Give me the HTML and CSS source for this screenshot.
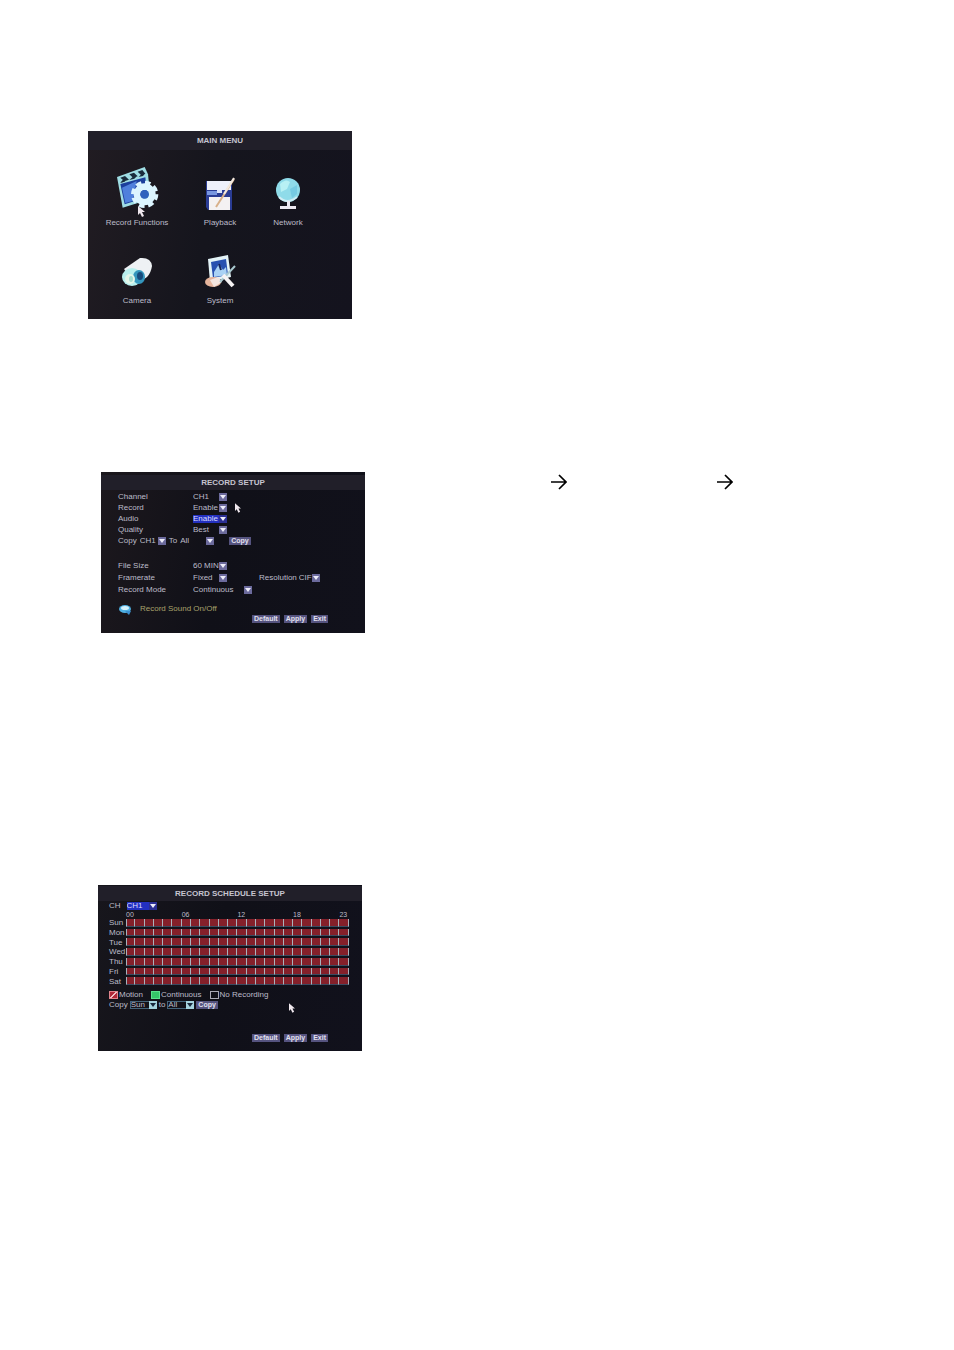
FILE: index.html
```html
<!DOCTYPE html>
<html lang="en">
<head>
    <meta charset="UTF-8">
    <meta name="viewport" content="width=device-width, initial-scale=1.0">
    <title>DVR Record Setup</title>
    <link rel="stylesheet" href="styles.css">
</head>
<body>

    <main class="page">

        <!-- main menu -->
        <section class="screen menu-screen">
            <h2 class="title">MAIN MENU</h2>
            <nav class="menu">
                <a class="item" href="#record">
                    <svg width="44" height="45" viewBox="45 33 132 135">
                        <path d="M51 66 L134 36 L144 58 L152 132 L68 158 Z" fill="#9fdde4"/>
                        <path d="M61 87 L136 67 L143 126 L74 148 Z" fill="#1c3f9c"/>
                        <path d="M66 98 L110 78 L98 138 L76 144 Z" fill="#4f80dc"/>
                        <path d="M61 68 l14 -5 l12 11 l-14 5z M88 58 l14 -5 l11 11 l-14 4z M113 50 l14 -5 l9 11 l-13 4z M60 84 l8 -9 l14 -4 l-8 9z M88 75 l10 -9 l14 -4 l-9 9z M116 66 l8 -8 l12 -3 l-7 8z" fill="#1a2c3c"/>
                        <circle cx="134" cy="118" r="23" fill="none" stroke="#dcf5ff" stroke-width="20"/>
                        <circle cx="134" cy="118" r="34" fill="none" stroke="#dcf5ff" stroke-width="14" stroke-dasharray="16 10.7"/>
                        <circle cx="134" cy="118" r="13" fill="#2f62bd"/>
                    </svg>
                    <span>Record Functions</span>
                    <svg class="cursor menu-cursor" width="7" height="11" viewBox="0 0 7 11"><path d="M0 0 L7 6 L4 6 L6 10 L4 11 L2 7 L0 9 Z" fill="#f0e8ee"/></svg>
                </a>
                <a class="item" href="#playback">
                    <svg width="32" height="34" viewBox="0 0 32 34">
                        <path d="M2 4 H28 V33 H4 L2 30 Z" fill="#2a3c94"/>
                        <path d="M3 4 H27 V13 H3 Z" fill="#eef0fa"/>
                        <path d="M3 14 H13 V18 H3 Z" fill="#7896e0"/>
                        <path d="M5 20 H26 V33 H5 Z" fill="#f4f1f2"/>
                        <path d="M13 13 H18 V16 H13 Z" fill="#dce4fa"/>
                        <path d="M30 2 L12 30" stroke="#d8b08a" stroke-width="2"/>
                        <path d="M30 1 L20 17" stroke="#f3e9df" stroke-width="2"/>
                    </svg>
                    <span>Playback</span>
                </a>
                <a class="item" href="#network">
                    <svg width="26" height="34" viewBox="0 0 26 34">
                        <circle cx="13" cy="13" r="12" fill="#8fdbe9"/>
                        <path d="M5 7 Q11 1 15 5 L12 12 L6 15 Z" fill="#b8f1f4"/>
                        <path d="M15 12 L22 8 L22 17 L17 21 Z" fill="#76cbe2"/>
                        <path d="M4 20 Q12 28 22 20" fill="none" stroke="#d0edf4" stroke-width="2"/>
                        <path d="M12 24 H15 V29 H21 V32 H5 V29 H12 Z" fill="#ece9f2"/>
                    </svg>
                    <span>Network</span>
                </a>
                <a class="item" href="#camera">
                    <svg width="32" height="34" viewBox="0 0 32 34">
                        <path d="M3 14 L19 3 Q30 2 31 11 Q30 18 26 22 L15 30 Z" fill="#eef1f4"/>
                        <ellipse cx="11" cy="22" rx="10" ry="9" fill="#b9f0ee"/>
                        <ellipse cx="18" cy="22" rx="6" ry="7" fill="#3496bd"/>
                        <ellipse cx="19" cy="21" rx="3" ry="4" fill="#174b7c"/>
                        <ellipse cx="9" cy="24" rx="5" ry="5" fill="#e4f7ea"/>
                        <ellipse cx="10" cy="24" rx="2" ry="3" fill="#a4ddd0"/>
                    </svg>
                    <span>Camera</span>
                </a>
                <a class="item" href="#system">
                    <svg width="32" height="34" viewBox="0 0 32 34">
                        <path d="M4 4 L24 0 L27 22 L6 27 Z" fill="#e3f3f7"/>
                        <path d="M7 7 L22 4 L24 20 L9 23 Z" fill="#2750b0"/>
                        <path d="M10 17 L15 9 L19 15 L22 12 L23 20 L10 22 Z" fill="#a9d2f4"/>
                        <path d="M15 9 L17 15" stroke="#14245c" stroke-width="2"/>
                        <ellipse cx="9" cy="27" rx="8" ry="5" fill="#e5b49c"/>
                        <path d="M6 25 L14 22 L18 27 L10 32 Z" fill="#f3e5df"/>
                        <path d="M31 11 L16 27" stroke="#a9c9d0" stroke-width="2"/>
                        <path d="M19 20 L29 31" stroke="#f6f3f4" stroke-width="4"/>
                    </svg>
                    <span>System</span>
                </a>
            </nav>
        </section>

        <!-- record setup -->
        <div class="step">
            <form class="screen setup-screen">
                <h2 class="title">RECORD SETUP</h2>
                <div class="fields">
                    <div class="row">
                        <label for="channel">Channel</label>
                        <span class="pick"><select id="channel"><option>CH1</option></select></span>
                    </div>
                    <div class="row">
                        <label for="record">Record</label>
                        <span class="pick"><select id="record"><option>Enable</option></select></span>
                    </div>
                    <div class="row">
                        <label for="audio">Audio</label>
                        <span class="pick active"><select id="audio"><option>Enable</option></select></span>
                    </div>
                    <div class="row">
                        <label for="quality">Quality</label>
                        <span class="pick"><select id="quality"><option>Best</option></select></span>
                    </div>
                    <div class="copy-row">
                        <label for="copyFrom">Copy</label>
                        <span class="pick short"><select id="copyFrom"><option>CH1</option></select></span>
                        <label for="copyTo">To</label>
                        <span class="pick"><select id="copyTo"><option>All</option></select></span>
                        <button type="button" class="copy-btn">Copy</button>
                    </div>
                </div>
                <div class="fields second">
                    <div class="row">
                        <label for="fileSize">File Size</label>
                        <span class="pick"><select id="fileSize"><option>60 MIN</option></select></span>
                    </div>
                    <div class="row">
                        <label for="framerate">Framerate</label>
                        <span class="pick"><select id="framerate"><option>Fixed</option></select></span>
                        <span class="resolution">
                            <label for="resolution">Resolution</label>
                            <span class="pick short"><select id="resolution"><option>CIF</option></select></span>
                        </span>
                    </div>
                    <div class="row">
                        <label for="mode">Record Mode</label>
                        <span class="pick long"><select id="mode"><option>Continuous</option></select></span>
                    </div>
                </div>
                <p class="hint">
                    <svg width="13" height="11" viewBox="0 0 13 11">
                        <ellipse cx="6" cy="5" rx="6" ry="4" fill="#4fb0e2"/>
                        <path d="M6 7 L12 7 L10 11 Z" fill="#3b8fd0"/>
                        <ellipse cx="6" cy="4" rx="4" ry="2" fill="#d3f0fa"/>
                    </svg>
                    Record Sound On/Off
                </p>
                <div class="buttons">
                    <button type="button">Default</button>
                    <button type="button">Apply</button>
                    <button type="button">Exit</button>
                </div>
                <svg class="cursor setup-cursor" width="6" height="10" viewBox="0 0 7 11"><path d="M0 0 L7 6 L4 6 L6 10 L4 11 L2 7 L0 9 Z" fill="#f0e8ee"/></svg>
            </form>
            <div class="path">
                <svg class="arrow" width="16" height="16" viewBox="0 0 16 16"><path d="M0 8 H15 M8 1 L15 8 L8 15" fill="none" stroke="#000" stroke-width="1.7"/></svg>
                <svg class="arrow" width="16" height="16" viewBox="0 0 16 16"><path d="M0 8 H15 M8 1 L15 8 L8 15" fill="none" stroke="#000" stroke-width="1.7"/></svg>
            </div>
        </div>

        <!-- schedule -->
        <form class="screen schedule-screen">
            <h2 class="title">RECORD SCHEDULE SETUP</h2>
            <div class="channel-row">
                <label for="scheduleChannel">CH</label>
                <span class="pick active"><select id="scheduleChannel"><option>CH1</option></select></span>
            </div>
            <table class="schedule">
                <thead>
                    <tr>
                        <th class="day"></th>
                        <th colspan="6">00</th>
                        <th colspan="6">06</th>
                        <th colspan="6">12</th>
                        <th colspan="5">18</th>
                        <th>23</th>
                    </tr>
                </thead>
                <tbody id="days"></tbody>
            </table>
            <div class="legend">
                <label><input type="checkbox" class="motion" checked>Motion</label>
                <label><input type="checkbox" class="continuous">Continuous</label>
                <label><input type="checkbox">No Recording</label>
            </div>
            <div class="copy-days">
                <label for="dayFrom">Copy</label>
                <span class="pick boxed"><select id="dayFrom"><option>Sun</option></select></span>
                <label for="dayTo">to</label>
                <span class="pick boxed"><select id="dayTo"><option>All</option></select></span>
                <button type="button">Copy</button>
            </div>
            <div class="buttons">
                <button type="button">Default</button>
                <button type="button">Apply</button>
                <button type="button">Exit</button>
            </div>
            <svg class="cursor schedule-cursor" width="6" height="10" viewBox="0 0 7 11"><path d="M0 0 L7 6 L4 6 L6 10 L4 11 L2 7 L0 9 Z" fill="#f0e8ee"/></svg>
        </form>

    </main>

    <script>
        const days = ["Sun", "Mon", "Tue", "Wed", "Thu", "Fri", "Sat"];
        const body = document.getElementById("days");

        days.forEach(day => {
            const row = body.insertRow();
            const head = document.createElement("th");
            head.className = "day";
            head.innerText = day;
            row.appendChild(head);
            for (let hour = 0; hour < 24; hour++) {
                row.insertCell();
            }
        });
    </script>

</body>
</html>
```
FILE: styles.css
```css
* {
    box-sizing: border-box;
}
body {
    margin: 0;
    background: white;
    font-family: "Liberation Sans", Arial, sans-serif;
    font-size: 8px;
    line-height: 10px;
}
.page {
    padding: 131px 88px;
}
.screen {
    position: relative;
    width: 100%;
    max-width: 264px;
    color: #bdbcc9;
    background: linear-gradient(100deg, #211c22, #15151d 45%, #14131e);
}
.title {
    margin: 0;
    font-size: 8px;
    line-height: 15px;
    text-align: center;
    color: #c6c4d0;
    background: #211f29;
}
.cursor {
    position: absolute;
}

/* main menu */
.menu-screen {
    padding-bottom: 13px;
}
.menu-screen .title {
    line-height: 19px;
}
.menu {
    display: grid;
    grid-template-columns: 98px 68px 68px;
    grid-auto-rows: 78px;
}
.item {
    position: relative;
    display: flex;
    flex-direction: column;
    align-items: center;
    justify-content: flex-end;
    gap: 7px;
    color: inherit;
    text-decoration: none;
    white-space: nowrap;
}
.menu-cursor {
    left: 50px;
    bottom: 11px;
}

/* form controls */
.pick {
    position: relative;
    display: inline-flex;
    width: 34px;
    height: 8px;
}
.pick::before {
    content: "";
    position: absolute;
    right: 0;
    top: 0;
    width: 8px;
    height: 8px;
    background: #6b6a9c;
    pointer-events: none;
}
.pick::after {
    content: "";
    position: absolute;
    right: 1px;
    top: 2px;
    border: 3px solid transparent;
    border-top: 4px solid #eeeefa;
    border-bottom: 0;
    pointer-events: none;
}
.pick.short {
    width: 26px;
}
.pick.long {
    width: 59px;
}
select {
    appearance: none;
    width: 100%;
    height: 8px;
    padding: 0;
    border: 0;
    border-radius: 0;
    background: transparent;
    color: inherit;
    font: inherit;
    line-height: 8px;
}
.active select {
    background: #2330c0;
    color: #dcdcff;
}
.active::before {
    background: #2b2f94;
}
button {
    height: 8px;
    padding: 0 2px;
    border: 0;
    background: #55537f;
    color: #e2e0ee;
    font: bold 7px/8px "Liberation Sans", Arial, sans-serif;
}
.buttons {
    display: flex;
    justify-content: flex-end;
    gap: 4px;
}

/* record setup */
.step {
    display: flex;
    align-items: flex-start;
    gap: 186px;
    margin: 153px 0 252px 13px;
}
.setup-screen {
    padding: 3px 0 10px;
    background: linear-gradient(100deg, #1c181d, #101018 45%, #11111b);
}
.fields {
    padding: 1px 0 0 17px;
}
.fields.second {
    padding-top: 13px;
}
.row {
    display: flex;
    align-items: center;
    height: 11px;
}
.second .row {
    height: 12px;
}
.row > label {
    width: 75px;
}
.copy-row {
    display: flex;
    align-items: center;
    gap: 3px;
    height: 12px;
}
.copy-btn {
    margin-left: 12px;
}
.resolution {
    display: flex;
    align-items: center;
    gap: 2px;
    margin-left: 32px;
}
.resolution .short {
    width: 21px;
}
.hint {
    display: flex;
    align-items: center;
    gap: 8px;
    height: 12px;
    margin: 7px 0 0 18px;
    color: #a8a26c;
}
.setup-screen .buttons {
    padding-right: 37px;
}
.setup-cursor {
    left: 134px;
    top: 31px;
}
.path {
    display: flex;
    gap: 150px;
    padding-top: 2px;
}

/* schedule */
.schedule-screen {
    margin-left: 10px;
    padding: 1px 0 9px;
    background: linear-gradient(100deg, #17161c, #101018 45%, #11111c);
}
.channel-row {
    display: flex;
    align-items: center;
    gap: 6px;
    height: 9px;
    padding-left: 11px;
}
.channel-row .pick {
    width: 30px;
}
.schedule {
    width: 240px;
    height: 77px;
    margin-left: 11px;
    table-layout: fixed;
    border-collapse: separate;
    border-spacing: 0 2px;
}
.schedule th {
    padding: 0;
    font-weight: normal;
    line-height: 7px;
    text-align: left;
}
.schedule thead th {
    height: 5px;
    font-size: 7px;
    line-height: 5px;
}
.schedule .day {
    width: 17px;
}
.schedule td {
    padding: 0;
    border-right: 1px solid #a9b3bd;
    border-bottom: 1px solid #3a4a60;
    background: #84202a;
}
.schedule .day + td {
    border-left: 1px solid #a9b3bd;
}
.legend {
    display: flex;
    align-items: center;
    gap: 8px;
    height: 11px;
    margin-top: 2px;
    padding-left: 11px;
}
.legend label {
    display: flex;
    align-items: center;
    gap: 1px;
}
.legend input {
    appearance: none;
    width: 9px;
    height: 8px;
    margin: 0;
    border: 1px solid #a8a8b4;
}
.legend .motion {
    border-color: #e0848c;
    background: linear-gradient(135deg, #b02838 45%, #f0c0c4 45%, #f0c0c4 55%, #b02838 55%);
}
.legend .continuous {
    border-color: #5be08c;
    background: #35c468;
}
.copy-days {
    display: flex;
    align-items: center;
    gap: 2px;
    height: 10px;
    padding-left: 11px;
}
.copy-days .pick {
    width: 27px;
}
.boxed select {
    border: 1px solid #44647a;
    line-height: 6px;
}
.boxed::before {
    background: #a5d3de;
}
.boxed::after {
    border-top-color: #18283c;
}
.schedule-screen .buttons {
    margin-top: 24px;
    padding-right: 34px;
}
.schedule-cursor {
    left: 191px;
    top: 118px;
}
```
